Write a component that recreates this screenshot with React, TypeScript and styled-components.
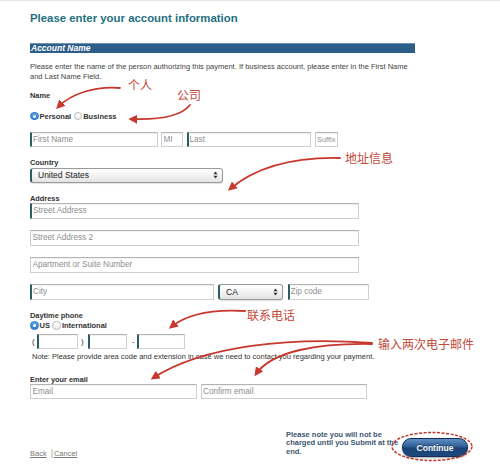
import React from 'react';
import styled, { createGlobalStyle } from 'styled-components';

const GlobalStyle = createGlobalStyle`
  html, body {
    margin: 0;
    padding: 0;
    background: #fff;
  }
  body {
    font-family: 'Liberation Sans', Arial, Helvetica, sans-serif;
    color: #333;
  }
  * {
    box-sizing: border-box;
  }
`;

const Page = styled.div`
  position: relative;
  width: 500px;
  height: 465px;
  overflow: hidden;
  border-top: 1px solid #e2e2e2;
  padding: 9px 0 0 30px;
`;

const Title = styled.h1`
  margin: 0;
  font-size: 11.4px;
  line-height: 16px;
  font-weight: 700;
  color: #25707f;
`;

const SectionBar = styled.div`
  margin-top: 17px;
  width: 385px;
  height: 9.5px;
  background: #2d5e89;
  border-top: 1px solid #6f93b3;
  color: #fff;
  font-size: 8.5px;
  line-height: 8.5px;
  font-weight: 700;
  font-style: italic;
  padding-left: 1px;
`;

const Description = styled.p`
  margin: 9.5px 0 0;
  font-size: 7.5px;
  line-height: 9.5px;
  color: #444;
`;

const Label = styled.div<{ $mt: number }>`
  margin-top: ${p => p.$mt}px;
  font-size: 7.4px;
  line-height: 9px;
  font-weight: 700;
  color: #333;
`;

const RadioRow = styled.div<{ $mt: number }>`
  margin-top: ${p => p.$mt}px;
  display: flex;
  align-items: center;
  gap: 2.5px;
  height: 10px;
`;

const RadioOption = styled.label`
  display: flex;
  align-items: center;
  gap: 1px;
  font-size: 7.5px;
  font-weight: 700;
  color: #333;
`;

const RadioDot = styled.span<{ $on?: boolean }>`
  width: 8.5px;
  height: 8.5px;
  border-radius: 50%;
  flex: none;
  display: flex;
  align-items: center;
  justify-content: center;
  border: 1px solid ${p => (p.$on ? '#2a78c9' : '#b9b9b9')};
  background: ${p =>
    p.$on ? 'linear-gradient(#5aa6ee, #2b7ed4)' : 'linear-gradient(#ffffff, #ececec)'};
  &::after {
    content: '';
    width: 3px;
    height: 3px;
    border-radius: 50%;
    background: #fff;
    display: ${p => (p.$on ? 'block' : 'none')};
  }
`;

const FieldRow = styled.div<{ $mt: number; $gap: number }>`
  margin-top: ${p => p.$mt}px;
  display: flex;
  align-items: center;
  gap: ${p => p.$gap}px;
`;

const Field = styled.input<{ $w: number; $h?: number; $fs?: number; $accent?: boolean }>`
  display: block;
  width: ${p => p.$w}px;
  height: ${p => p.$h ?? 15.5}px;
  margin: 0;
  padding: 0 0 0 ${p => (p.$accent ? 1 : 1.5)}px;
  border: 1px solid #d0d0d0;
  border-top-color: #b4b4b4;
  border-left: ${p => (p.$accent ? '2px solid #2c5c66' : '1px solid #cdcdcd')};
  box-shadow: inset 0 1px 1px rgba(0, 0, 0, 0.06);
  background: #fff;
  font-family: 'Liberation Sans', Arial, Helvetica, sans-serif;
  font-size: ${p => p.$fs ?? 8.2}px;
  color: #333;
  outline: none;
  &::placeholder {
    color: #8e8e8e;
  }
`;

const FakeSelect = styled.div<{ $w: number; $mt?: number }>`
  margin-top: ${p => p.$mt ?? 0}px;
  width: ${p => p.$w}px;
  height: 15.5px;
  display: flex;
  align-items: center;
  justify-content: space-between;
  padding: 0 4px 0 6px;
  border: 1px solid #9a9a9a;
  border-left: 2px solid #2c5c66;
  border-radius: 3px;
  background: linear-gradient(#ffffff, #f1f1f1 55%, #e2e2e2);
  box-shadow: 0 1px 1px rgba(0, 0, 0, 0.12);
  font-size: 8.5px;
  color: #222;
`;

const PhoneSep = styled.span<{ $l: number; $r: number }>`
  margin: 0 ${p => p.$r}px 0 ${p => p.$l}px;
  font-size: 8px;
  color: #333;
`;

const PhoneRow = styled.div`
  margin-top: 3.5px;
  display: flex;
  align-items: center;
`;

const Note = styled.p`
  margin: 3px 0 0 2px;
  font-size: 7.5px;
  line-height: 9px;
  color: #333;
`;

const Footer = styled.div`
  margin-top: 31.5px;
  width: 438px;
  display: flex;
  justify-content: space-between;
  align-items: flex-end;
`;

const Links = styled.div`
  display: flex;
  align-items: center;
  font-size: 7.5px;
  line-height: 9px;
  margin-bottom: -1.5px;
`;

const LinkA = styled.a`
  color: #7a7a7a;
  text-decoration: underline;
`;

const Pipe = styled.span`
  margin: 0 1px 0 4px;
  color: #999;
  font-size: 8.5px;
`;

const SubmitGroup = styled.div`
  display: flex;
  align-items: flex-end;
`;

const SubmitNote = styled.p`
  margin: 0;
  width: 116px;
  font-size: 7.5px;
  line-height: 8.5px;
  font-weight: 700;
  color: #3b5670;
`;

const ContinueButton = styled.button`
  width: 66px;
  height: 19px;
  margin-bottom: -1px;
  border: 1px solid #12305a;
  border-radius: 9px;
  background: linear-gradient(#5f8fc4, #2a5a93 48%, #1b4275 52%, #1d497f);
  box-shadow: 0 1px 2px rgba(0, 0, 0, 0.35);
  color: #fff;
  font-family: 'Liberation Sans', Arial, Helvetica, sans-serif;
  font-size: 8.5px;
  font-weight: 700;
  text-shadow: 0 -1px 0 rgba(0, 0, 0, 0.4);
  padding: 0;
`;

const Annotation = styled.div<{ $x: number; $y: number }>`
  position: absolute;
  left: ${p => p.$x}px;
  top: ${p => p.$y}px;
  font-family: 'Noto Sans CJK SC', 'Liberation Sans', sans-serif;
  font-size: 12px;
  line-height: 12px;
  color: #c2483a;
  white-space: nowrap;
  pointer-events: none;
`;

const Overlay = styled.svg`
  position: absolute;
  left: 0;
  top: 0;
  pointer-events: none;
`;

const SelectArrows = () => (
  <svg width="5" height="8" viewBox="0 0 5 8">
    <path d="M2.5 0.5 L4.6 3.2 H0.4 Z M2.5 7.5 L4.6 4.8 H0.4 Z" fill="#333" />
  </svg>
);

const arrows = [
  'M120,87 C96,85 72,92 58,106',
  'M190,104 C181,115 158,119 131,118',
  'M340,157 C292,156 256,166 230,188',
  'M245,310 C212,308 187,313 171,326',
  'M372,342 C292,336 204,344 153,377',
  'M372,343 C318,342 272,350 256,373',
];

export default function App() {
  return (
    <>
      <GlobalStyle />
      <Page>
        <Title>Please enter your account information</Title>
        <SectionBar>Account Name</SectionBar>
        <Description>
          Please enter the name of the person authorizing this payment. If business account, please
          enter in the First Name
          <br />
          and Last Name Field.
        </Description>

        <Label $mt={10}>Name</Label>
        <RadioRow $mt={11}>
          <RadioOption>
            <RadioDot $on />
            Personal
          </RadioOption>
          <RadioOption>
            <RadioDot />
            Business
          </RadioOption>
        </RadioRow>

        <FieldRow $mt={10.5} $gap={3.5}>
          <Field $w={127.5} $accent placeholder="First Name" />
          <Field $w={22} placeholder="MI" />
          <Field $w={124.5} $accent placeholder="Last" />
          <Field $w={23} $fs={7.4} placeholder="Suffix" />
        </FieldRow>

        <Label $mt={11}>Country</Label>
        <FakeSelect $w={193} $mt={0.5}>
          United States
          <SelectArrows />
        </FakeSelect>

        <Label $mt={10.5}>Address</Label>
        <FieldRow $mt={0.5} $gap={0}>
          <Field $w={329} $accent placeholder="Street Address" />
        </FieldRow>
        <FieldRow $mt={11.5} $gap={0}>
          <Field $w={328.5} placeholder="Street Address 2" />
        </FieldRow>
        <FieldRow $mt={11.5} $gap={0}>
          <Field $w={328.5} placeholder="Apartment or Suite Number" />
        </FieldRow>
        <FieldRow $mt={11.5} $gap={4.5}>
          <Field $w={183.5} $accent placeholder="City" />
          <FakeSelect $w={65}>
            CA
            <SelectArrows />
          </FakeSelect>
          <Field $w={81} $accent placeholder="Zip code" />
        </FieldRow>

        <Label $mt={11.5}>Daytime phone</Label>
        <RadioRow $mt={0.5}>
          <RadioOption>
            <RadioDot $on />
            US
          </RadioOption>
          <RadioOption>
            <RadioDot />
            International
          </RadioOption>
        </RadioRow>
        <PhoneRow>
          <PhoneSep $l={2} $r={2.3}>(</PhoneSep>
          <Field $w={41} $h={15} $accent />
          <PhoneSep $l={3} $r={4.3}>)</PhoneSep>
          <Field $w={39} $h={15} $accent />
          <PhoneSep $l={5} $r={2.3}>-</PhoneSep>
          <Field $w={48} $h={15} $accent />
        </PhoneRow>
        <Note>
          Note: Please provide area code and extension in case we need to contact you regarding your
          payment.
        </Note>

        <Label $mt={13.5}>Enter your email</Label>
        <FieldRow $mt={0} $gap={3.5}>
          <Field $w={167} placeholder="Email" />
          <Field $w={166.5} placeholder="Confirm email" />
        </FieldRow>

        <Footer>
          <Links>
            <LinkA href="#">Back</LinkA>
            <Pipe>|</Pipe>
            <LinkA href="#">Cancel</LinkA>
          </Links>
          <SubmitGroup>
            <SubmitNote>Please note you will not be charged until you Submit at the end.</SubmitNote>
            <ContinueButton>Continue</ContinueButton>
          </SubmitGroup>
        </Footer>

        <Annotation $x={128} $y={77.5}>个人</Annotation>
        <Annotation $x={177} $y={88}>公司</Annotation>
        <Annotation $x={345} $y={151}>地址信息</Annotation>
        <Annotation $x={247} $y={307.5}>联系电话</Annotation>
        <Annotation $x={378} $y={336.5}>输入两次电子邮件</Annotation>

        <Overlay width="500" height="465" viewBox="0 0 500 465">
          <defs>
            <marker
              id="head"
              viewBox="0 0 10 10"
              refX="7"
              refY="5"
              markerWidth="9"
              markerHeight="9"
              markerUnits="userSpaceOnUse"
              orient="auto"
            >
              <path d="M0,0 L10,5 L0,10 Z" fill="#c8372d" />
            </marker>
          </defs>
          {arrows.map(d => (
            <path
              key={d}
              d={d}
              fill="none"
              stroke="#c8372d"
              strokeWidth="1.8"
              strokeLinecap="round"
              markerEnd="url(#head)"
            />
          ))}
          <ellipse
            cx="432"
            cy="445.5"
            rx="40"
            ry="14"
            fill="none"
            stroke="#c0392b"
            strokeWidth="1.5"
            strokeDasharray="3 1.5"
          />
        </Overlay>
      </Page>
    </>
  );
}
